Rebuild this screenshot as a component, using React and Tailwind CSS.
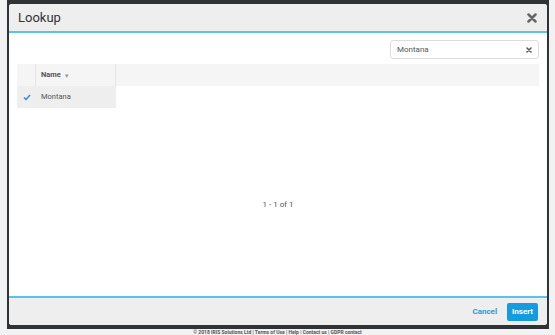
import React from "react";

const LookupModal = () => {
  return (
    <div className="w-[555px] h-[335px] bg-[#f2f2f2] overflow-hidden font-['Roboto',sans-serif]">
      <div className="ml-[7px] w-[542px] h-[329px] bg-[#2f3336] pt-[4px] pl-[2px]">
        <div className="w-[538px] h-[321px] bg-white rounded-[3px] overflow-hidden flex flex-col">
          {/* Header */}
          <div className="h-[29px] shrink-0 bg-[#eeeeee] border-b-2 border-[#5bc3ea] flex items-center justify-between pl-[9px] pr-[10px]">
            <span className="text-[13px] text-[#333] leading-none">Lookup</span>
            <svg width="10" height="10" viewBox="0 0 10 10">
              <path d="M1.5 1.5 L8.5 8.5 M8.5 1.5 L1.5 8.5" stroke="#666" strokeWidth="2.5" strokeLinecap="round" />
            </svg>
          </div>

          {/* Body */}
          <div className="flex-1 flex flex-col px-[8px]">
            <div className="flex justify-end pt-[7px]">
              <div className="w-[149px] h-[19px] border border-[#dddddd] rounded-[3px] flex items-center justify-between pl-[6px] pr-[6px]">
                <span className="text-[8px] text-[#555]">Montana</span>
                <svg width="6" height="6" viewBox="0 0 6 6">
                  <path d="M1 1 L5 5 M5 1 L1 5" stroke="#555" strokeWidth="1.5" strokeLinecap="round" />
                </svg>
              </div>
            </div>

            <div className="mt-[5px]">
              <div className="flex h-[22px] bg-[#f5f5f5]">
                <div className="w-[19px] border-r border-[#e6e6e6]" />
                <div className="w-[80px] border-r border-[#e6e6e6] flex items-center pl-[5px]">
                  <span className="text-[7.5px] font-bold text-[#555]">Name</span>
                  <span className="text-[6px] text-[#999] ml-[3px]">▼</span>
                </div>
                <div className="flex-1" />
              </div>
              <div className="flex h-[22px]">
                <div className="w-[99px] bg-[#eeeeee] flex items-center">
                  <div className="w-[19px] flex justify-center">
                    <svg width="8" height="7" viewBox="0 0 8 7">
                      <path d="M1 3.5 L3 5.5 L7 1" stroke="#2a8ad8" strokeWidth="1.4" fill="none" />
                    </svg>
                  </div>
                  <span className="text-[7.5px] text-[#555] pl-[5px]">Montana</span>
                </div>
              </div>
            </div>

            <div className="flex-1 flex items-center justify-center pt-[6px]">
              <span className="text-[8px] text-[#555]">1 - 1 of 1</span>
            </div>
          </div>

          {/* Footer */}
          <div className="h-[29px] shrink-0 bg-[#eeeeee] border-t-2 border-[#5bc3ea] flex items-center justify-end gap-[10px] pr-[9px]">
            <span className="text-[8px] font-bold text-[#2b9ad6]">Cancel</span>
            <button className="w-[31px] h-[18px] bg-[#159be0] rounded-[2px] text-white text-[8px] font-bold">
              Insert
            </button>
          </div>
        </div>
      </div>
      <div className="h-[6px] flex justify-center items-start">
        <span className="text-[5px] font-bold text-[#555] leading-[6px] whitespace-nowrap">
          © 2018 IRIS Solutions Ltd | Terms of Use | Help | Contact us | GDPR contact
        </span>
      </div>
    </div>
  );
};

export default function App() {
  return <LookupModal />;
}
